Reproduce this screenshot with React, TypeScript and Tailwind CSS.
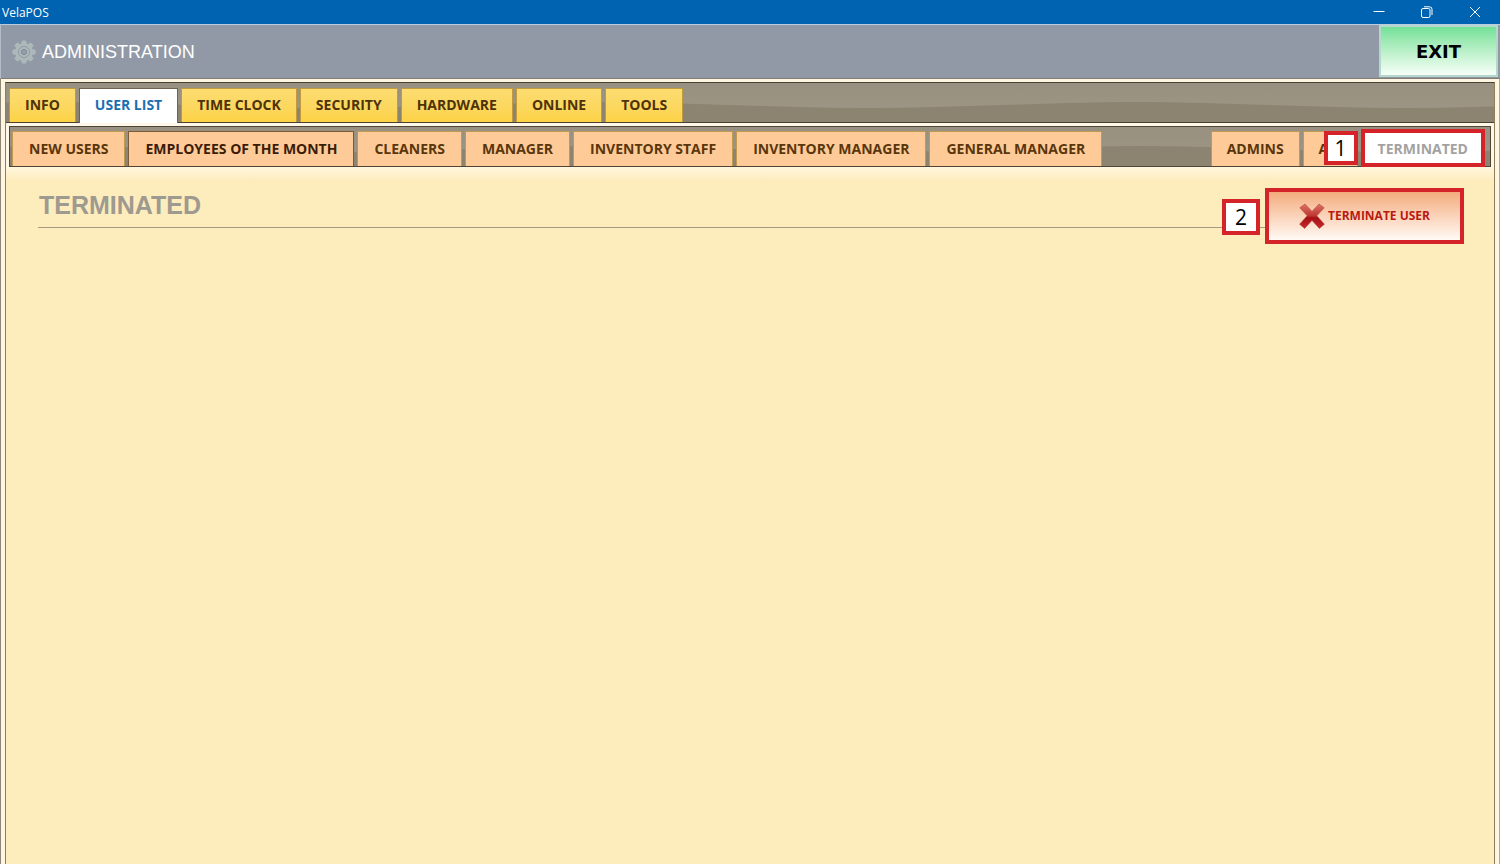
import clsx from 'clsx';

const mainTabs = ['INFO', 'USER LIST', 'TIME CLOCK', 'SECURITY', 'HARDWARE', 'ONLINE', 'TOOLS'];

const roleTabs = [
  'NEW USERS',
  'EMPLOYEES OF THE MONTH',
  'CLEANERS',
  'MANAGER',
  'INVENTORY STAFF',
  'INVENTORY MANAGER',
  'GENERAL MANAGER',
];

function GearIcon() {
  const teeth = [0, 45, 90, 135, 180, 225, 270, 315];

  return (
    <svg viewBox="0 0 24 24" className="h-6 w-6" aria-hidden="true">
      <g fill="#adb8bb">
        {teeth.map((angle) => (
          <path key={angle} d="M8.8 5 10 .4h4L15.2 5z" transform={`rotate(${angle} 12 12)`} />
        ))}
        <circle cx="12" cy="12" r="8.8" />
      </g>
      <circle cx="12" cy="12" r="5.6" fill="none" stroke="#8b979d" strokeWidth="0.9" />
      <circle cx="12" cy="12" r="2.7" fill="#929ba8" stroke="#7f8b92" strokeWidth="0.9" />
    </svg>
  );
}

function CrossIcon() {
  return (
    <svg viewBox="0 0 26 26" className="h-[26px] w-[26px]" aria-hidden="true">
      <defs>
        <linearGradient id="cross" x1="0" y1="0" x2="0" y2="1">
          <stop offset="0" stopColor="#dc7466" />
          <stop offset="0.5" stopColor="#bd3430" />
          <stop offset="0.56" stopColor="#a51015" />
          <stop offset="1" stopColor="#c9282c" />
        </linearGradient>
      </defs>
      <path
        d="M6 1 13 8.4 20 1 25.2 4.8 17.8 12.8 25.4 21.2 20.4 25.4 13 17.4 5.6 25.4.6 21.2 8.2 12.8.8 4.8z"
        fill="url(#cross)"
        stroke="#b5443c"
        strokeWidth="0.6"
      />
    </svg>
  );
}

// Dark lower half of a tab strip, with the soft wavy edge
function StripWave({ id }: { id: string }) {
  return (
    <svg className="absolute inset-0 h-full w-full" aria-hidden="true">
      <defs>
        <pattern id={id} x="50" width="540" height="40" patternUnits="userSpaceOnUse">
          <path d="M0 19C90 19 180 25 270 25S450 19 540 19V40H0z" fill="#8c8471" />
        </pattern>
      </defs>
      <rect width="100%" height="100%" fill={`url(#${id})`} />
    </svg>
  );
}

function Callout({ step, className }: { step: number; className: string }) {
  return (
    <span
      className={clsx(
        'absolute grid place-items-center border-4 border-[#d4242a] bg-white text-[21px] leading-none text-black',
        className,
      )}
    >
      {step}
    </span>
  );
}

function MainTab({ label, active }: { label: string; active: boolean }) {
  return (
    <button
      type="button"
      role="tab"
      aria-selected={active}
      className={clsx(
        'border border-b-0 px-[15px] text-[14px] font-bold whitespace-nowrap',
        active
          ? '-mb-px border-[#6f6250] bg-white pb-[3px] text-[#1b6fb0]'
          : 'border-[#c09a3e] bg-linear-to-b from-[#fddc70] via-[#fcd861] via-50% to-[#fdd244] pb-0.5 text-[#4e3208]',
      )}
    >
      {label}
    </button>
  );
}

type RoleTabProps = {
  label: string;
  focused?: boolean;
  className?: string;
};

function RoleTab({ label, focused = false, className = 'px-4' }: RoleTabProps) {
  return (
    <button
      type="button"
      role="tab"
      aria-selected={false}
      className={clsx(
        'border border-b-0 bg-[#fecb98] pb-0.5 text-[14px] font-bold whitespace-nowrap',
        focused ? 'border-[#7a5a38] text-[#3c1c06]' : 'border-[#c09a50] text-[#5a360c]',
        className,
      )}
    >
      {label}
    </button>
  );
}

export default function App() {
  return (
    <div className="flex min-h-screen flex-col bg-[#fff6e2] font-['Open_Sans','Noto_Sans',sans-serif]">
      {/* Window title bar */}
      <div className="flex h-6 items-center justify-between bg-[#0063b1] pr-px text-white">
        <span className="pt-0.5 pl-0.5 text-[12px]">VelaPOS</span>
        <div className="flex">
          <button type="button" aria-label="Minimize" className="grid h-6 w-12 place-items-center">
            <svg viewBox="0 0 12 12" className="h-3 w-3" fill="none" stroke="currentColor">
              <path d="M.5 5.5h11" />
            </svg>
          </button>
          <button type="button" aria-label="Restore" className="grid h-6 w-12 place-items-center">
            <svg viewBox="0 0 12 12" className="h-3 w-3" fill="none" stroke="currentColor">
              <rect x="0.5" y="2.5" width="8.5" height="9" rx="1.5" />
              <path d="M3 .8h5.5a2.5 2.5 0 0 1 2.5 2.5V9" />
            </svg>
          </button>
          <button type="button" aria-label="Close" className="grid h-6 w-12 place-items-center">
            <svg viewBox="0 0 12 12" className="h-3 w-3" fill="none" stroke="currentColor">
              <path d="m1 1 10 10M11 1 1 11" />
            </svg>
          </button>
        </div>
      </div>

      {/* Application header */}
      <header className="flex h-[55px] items-stretch justify-between border-t border-b border-l border-t-[#b9cde0] border-b-[#857c72] border-l-[#b4bcc8] bg-[#9199a7]">
        <div className="flex items-center gap-1.5 pl-[11px]">
          <GearIcon />
          <h1 className="pt-0.5 font-['Liberation_Sans',Arial,sans-serif] text-[18px] text-white">ADMINISTRATION</h1>
        </div>
        <button
          type="button"
          className="mr-0.5 mb-px w-[119px] border-2 border-[#b4d8cc] bg-linear-to-b from-[#72e097] to-[#f6fff8] font-['DejaVu_Sans',Verdana,sans-serif] text-[18px] font-bold text-black"
        >
          EXIT
        </button>
      </header>

      <div className="flex flex-1 flex-col border-x border-l-[#8d8576] border-r-[#b5a98a] px-1 pt-[3px]">
        <div className="flex flex-1 flex-col border border-b-0 border-[#8f7d5c] border-t-[#4a4034]">
          <div
            role="tablist"
            aria-label="Sections"
            className="relative flex h-10 border-b border-[#4a4034] bg-linear-to-b from-[#989080] to-[#a09885]"
          >
            <StripWave id="wave-main" />
            <div className="relative flex gap-[3px] pt-[5px] pl-[3px]">
              {mainTabs.map((label) => (
                <MainTab key={label} label={label} active={label === 'USER LIST'} />
              ))}
            </div>
          </div>

          <div className="flex flex-1 flex-col bg-[#fdecbc]">
            <div className="bg-[#fff8e8] px-[3px] pt-[3px]">
              <div
                role="tablist"
                aria-label="Roles"
                className="relative flex h-[41px] justify-between border border-[#4f4537] bg-linear-to-b from-[#989080] to-[#a09885]"
              >
                <StripWave id="wave-roles" />
                <div className="relative flex gap-[3px] pt-1 pl-0.5">
                  {roleTabs.map((label) => (
                    <RoleTab key={label} label={label} focused={label === 'EMPLOYEES OF THE MONTH'} />
                  ))}
                </div>
                <div className="relative flex gap-[3px] pr-[5px]">
                  <div className="flex gap-[3px] pt-1">
                    <RoleTab label="ADMINS" className="px-[15px]" />
                    <div className="relative flex w-[55px]">
                      <RoleTab label="A" className="flex-1 pl-[15px] text-left" />
                      <Callout step={1} className="top-0 right-0 h-[34px] w-[34px]" />
                    </div>
                  </div>
                  <button
                    type="button"
                    role="tab"
                    aria-selected={true}
                    className="mt-[2px] -mb-px border-4 border-[#d4242a] bg-white px-[13px] text-[14px] font-bold text-[#a2a2a2]"
                  >
                    TERMINATED
                  </button>
                </div>
              </div>
            </div>

            <main className="flex items-start bg-linear-to-b from-[#fff6dc] to-[#fdecbc] to-[14px] pt-[21px] pr-[30px] pl-8">
              <div className="relative flex-1">
                <h2 className="h-10 border-b border-[#a39a80] pl-px font-['Liberation_Sans',Arial,sans-serif] text-[25px] leading-[35px] font-bold text-[#9e9a90]">
                  TERMINATED
                </h2>
                <Callout step={2} className="top-[11px] right-[5px] h-9 w-[38px]" />
              </div>
              <button
                type="button"
                className="flex h-14 w-[199px] items-center justify-center gap-[3px] border-4 border-[#d4242a] bg-linear-to-b from-[#f3ab7c] to-[#fffaf5] text-[12px] font-bold text-[#b81a12]"
              >
                <CrossIcon />
                TERMINATE USER
              </button>
            </main>
          </div>
        </div>
      </div>
    </div>
  );
}
